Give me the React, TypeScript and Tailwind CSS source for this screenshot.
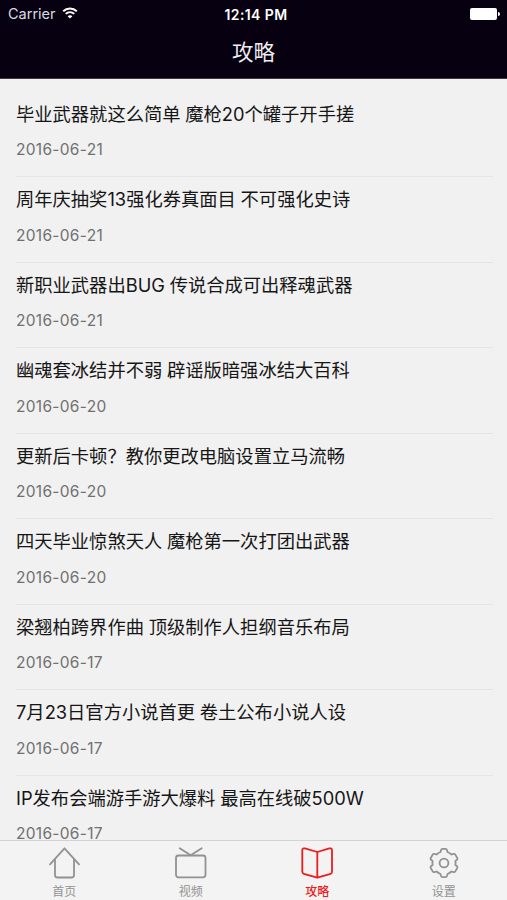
import type { ReactNode } from "react";

interface Article {
    title: string;
    date: string;
}

const articles: Article[] = [
    { title: "毕业武器就这么简单 魔枪20个罐子开手搓", date: "2016-06-21" },
    { title: "周年庆抽奖13强化券真面目 不可强化史诗", date: "2016-06-21" },
    { title: "新职业武器出BUG 传说合成可出释魂武器", date: "2016-06-21" },
    { title: "幽魂套冰结并不弱 辟谣版暗强冰结大百科", date: "2016-06-20" },
    { title: "更新后卡顿？教你更改电脑设置立马流畅", date: "2016-06-20" },
    { title: "四天毕业惊煞天人 魔枪第一次打团出武器", date: "2016-06-20" },
    { title: "梁翘柏跨界作曲 顶级制作人担纲音乐布局", date: "2016-06-17" },
    { title: "7月23日官方小说首更 卷土公布小说人设", date: "2016-06-17" },
    { title: "IP发布会端游手游大爆料 最高在线破500W", date: "2016-06-17" },
];

function StatusBar() {
    return (
        <div className="grid h-7 grid-cols-3 items-center pl-2 pr-[7px] text-white">
            <div className="flex items-center gap-[6px]">
                <span className="text-[14.5px] text-[#dcdae0]">Carrier</span>
                <svg className="-mt-0.5 h-[12px] w-4" viewBox="0 0 16 12" fill="none" stroke="#fff" strokeWidth="1.9">
                    <path d="M1.2 4.2C5 .5 11 .5 14.8 4.2" />
                    <path d="M3.7 6.9C6.2 4.6 9.8 4.6 12.3 6.9" />
                    <path d="M8 11.6L5.6 9.2C7 7.9 9 7.9 10.4 9.2Z" fill="#fff" stroke="none" />
                </svg>
            </div>
            <span className="whitespace-nowrap pl-1 text-center text-[14px] font-semibold tracking-[0.4px]">12:14 PM</span>
            <div className="flex items-center justify-end gap-px">
                <span className="h-3 w-[27px] rounded-[2px] bg-white" />
                <span className="h-1 w-[2px] rounded-r-full bg-white" />
            </div>
        </div>
    );
}

function ArticleRow({ title, date }: Article) {
    return (
        <li className="h-[85.5px] shrink-0 border-b border-[#e5e5e5] pt-2">
            <h2 className="whitespace-nowrap text-[18.3px] leading-[28px] text-[#161616] [word-spacing:-0.4px]">{title}</h2>
            <p className="mt-[10.5px] text-[15.5px] leading-[24px] tracking-[0.3px] text-[#707070]">{date}</p>
        </li>
    );
}

interface TabProps {
    label: string;
    active?: boolean;
    children: ReactNode;
}

function Tab({ label, active, children }: TabProps) {
    return (
        <button className={`flex flex-1 flex-col items-center pt-[6px] ${active ? "font-medium text-[#ee1c1c]" : "text-[#929292]"}`}>
            <svg className="size-8" viewBox="0 0 32 32" fill="none" stroke="currentColor" strokeWidth="1.8" strokeLinecap="round" strokeLinejoin="round">
                {children}
            </svg>
            <span className="mt-[5px] text-[12px] leading-[16px]">{label}</span>
        </button>
    );
}

export default function App() {
    return (
        <div className="flex h-[900px] w-[507px] flex-col overflow-hidden bg-[#f1f1f1] font-['Inter','Noto_Sans_CJK_SC',sans-serif]">
            <header className="h-[79px] shrink-0 border-b border-[#3b3744] bg-[#070011]">
                <StatusBar />
                <h1 className="pt-2 text-center text-[21.5px] leading-[32px] text-[#eeedf0]">攻略</h1>
            </header>

            <ul className="flex min-h-0 flex-1 flex-col overflow-hidden pl-4 pr-[14px] pt-[12.5px]">
                {articles.map((article) => (
                    <ArticleRow key={article.title} {...article} />
                ))}
            </ul>

            <nav className="flex h-[60px] shrink-0 border-t border-[#d3d3d3] bg-[#f3f3f3] pl-px">
                <Tab label="首页">
                    <path d="M2 17.300L16.500 1.300L31 17.300" />
                    <path d="M7 13V28Q7 30.500 9.500 30.500H23.500Q26 30.500 26 28V13" />
                </Tab>
                <Tab label="视频">
                    <rect x="1" y="8.500" width="29.500" height="21.800" rx="2.500" />
                    <path d="M4.700 1.200L15.700 8.300L26.700 1.200" />
                </Tab>
                <Tab label="攻略" active>
                    <path d="M16.300 5L4 1.400Q1.300 .800 1.300 3.300V24.800Q1.300 26.400 2.800 26.800L16.300 30.600L29.600 26.800Q31 26.400 31 24.800V3.300Q31 .800 28.300 1.400Z" />
                    <path d="M16.300 5V30.300" />
                </Tab>
                <Tab label="设置">
                    <path d="M14.500 1.800H17.500Q18.600 1.800 19 3L19.500 5Q21.800 5.900 23.500 7.500L25.600 6.900Q26.700 6.600 27.300 7.600L29.300 11Q29.800 11.900 29 12.800L27.400 14Q27.800 16 27.400 18L29 19.200Q29.800 20.100 29.300 21L27.300 24.400Q26.700 25.400 25.600 25.100L23.500 24.500Q21.800 26.100 19.500 27L19 29Q18.600 30.200 17.500 30.200H14.500Q13.400 30.200 13 29L12.500 27Q10.200 26.100 8.500 24.500L6.400 25.100Q5.300 25.400 4.700 24.400L2.700 21Q2.200 20.100 3 19.200L4.600 18Q4.200 16 4.600 14L3 12.800Q2.200 11.900 2.700 11L4.700 7.600Q5.300 6.600 6.400 6.900L8.500 7.500Q10.200 5.900 12.500 5L13 3Q13.400 1.800 14.500 1.800Z" />
                    <circle cx="16" cy="16" r="4.400" />
                </Tab>
            </nav>
        </div>
    );
}
